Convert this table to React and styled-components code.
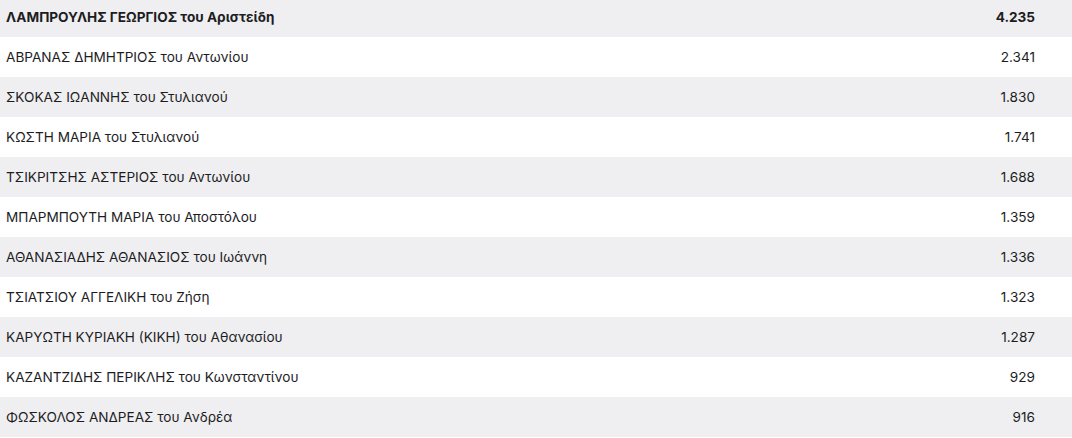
import React from "react";
import styled, { createGlobalStyle } from "styled-components";

const GlobalStyle = createGlobalStyle`
  body {
    margin: 0;
    background: #ffffff;
    font-family: Inter, "Liberation Sans", sans-serif;
    color: #1d1d1f;
  }
`;

const Wrapper = styled.div`
  margin-top: -3px;
  overflow: hidden;
`;

const Table = styled.table`
  width: 100%;
  border-collapse: collapse;
  font-size: 13.6px;
`;

const Row = styled.tr`
  height: 40px;
  background: ${(p) => (p.$shaded ? "#efeff1" : "#ffffff")};
  font-weight: ${(p) => (p.$lead ? 700 : 400)};
`;

const Name = styled.td`
  padding: 0 6px;
  text-align: left;
  white-space: nowrap;
`;

const Votes = styled.td`
  padding: 0 37px 0 6px;
  text-align: right;
  white-space: nowrap;
`;

const candidates = [
  { name: "ΛΑΜΠΡΟΥΛΗΣ ΓΕΩΡΓΙΟΣ του Αριστείδη", votes: "4.235" },
  { name: "ΑΒΡΑΝΑΣ ΔΗΜΗΤΡΙΟΣ του Αντωνίου", votes: "2.341" },
  { name: "ΣΚΟΚΑΣ ΙΩΑΝΝΗΣ του Στυλιανού", votes: "1.830" },
  { name: "ΚΩΣΤΗ ΜΑΡΙΑ του Στυλιανού", votes: "1.741" },
  { name: "ΤΣΙΚΡΙΤΣΗΣ ΑΣΤΕΡΙΟΣ του Αντωνίου", votes: "1.688" },
  { name: "ΜΠΑΡΜΠΟΥΤΗ ΜΑΡΙΑ του Αποστόλου", votes: "1.359" },
  { name: "ΑΘΑΝΑΣΙΑΔΗΣ ΑΘΑΝΑΣΙΟΣ του Ιωάννη", votes: "1.336" },
  { name: "ΤΣΙΑΤΣΙΟΥ ΑΓΓΕΛΙΚΗ του Ζήση", votes: "1.323" },
  { name: "ΚΑΡΥΩΤΗ ΚΥΡΙΑΚΗ (ΚΙΚΗ) του Αθανασίου", votes: "1.287" },
  { name: "ΚΑΖΑΝΤΖΙΔΗΣ ΠΕΡΙΚΛΗΣ του Κωνσταντίνου", votes: "929" },
  { name: "ΦΩΣΚΟΛΟΣ ΑΝΔΡΕΑΣ του Ανδρέα", votes: "916" },
];

export default function App() {
  return (
    <>
      <GlobalStyle />
      <Wrapper>
        <Table>
          <tbody>
            {candidates.map((c, i) => (
              <Row key={c.name} $shaded={i % 2 === 0} $lead={i === 0}>
                <Name>{c.name}</Name>
                <Votes>{c.votes}</Votes>
              </Row>
            ))}
          </tbody>
        </Table>
      </Wrapper>
    </>
  );
}
